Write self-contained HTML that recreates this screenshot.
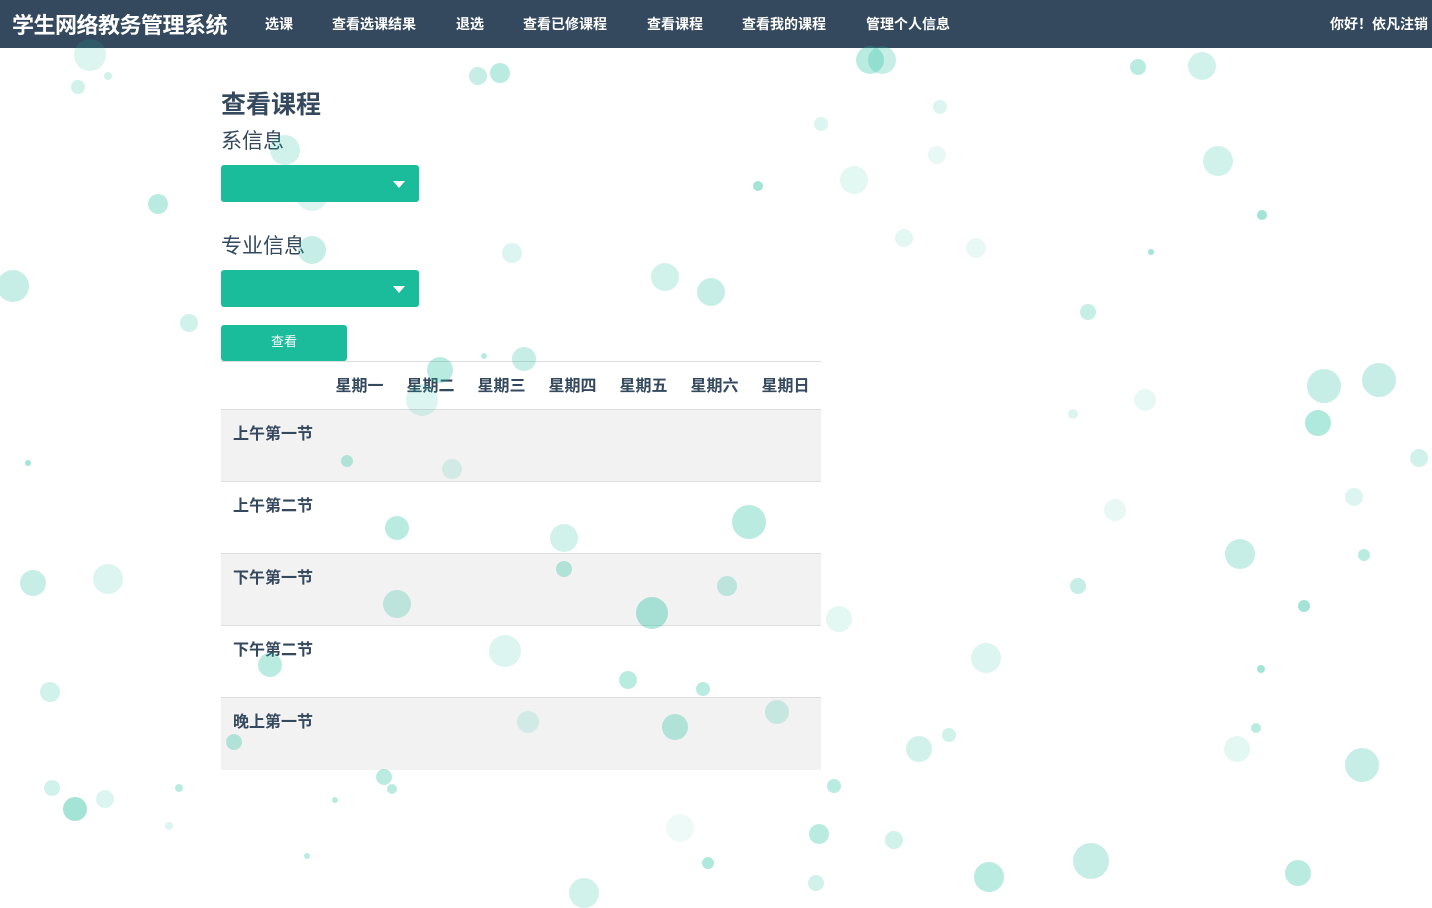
<!DOCTYPE html>
<html><head><meta charset="utf-8"><style>
*{margin:0;padding:0;box-sizing:border-box}
body{width:1432px;height:899px;overflow:hidden;background:#fff;font-family:"Liberation Sans","Noto Sans CJK SC",sans-serif;position:relative;color:#34495e}
.nav{position:absolute;left:0;top:0;width:1432px;height:48px;background:#34495e;color:#fff;z-index:1}
.nav .brand{position:absolute;left:12px;top:8px;font-size:22px;font-weight:bold;letter-spacing:-0.5px;white-space:nowrap}
.nav a{position:absolute;top:14px;font-size:14px;font-weight:bold;color:#fff;text-decoration:none;white-space:nowrap}
.nav .r{position:absolute;right:4px;top:14px;font-size:14px;font-weight:bold;white-space:nowrap}
.b{position:absolute;border-radius:50%;background:#1abc9c}
.c{position:absolute;left:0;top:0;width:1432px;height:899px;z-index:2}
h2{position:absolute;left:221px;top:85px;font-size:25px;font-weight:bold;color:#34495e;white-space:nowrap}
.lbl{position:absolute;left:221px;font-size:21px;color:#34495e;white-space:nowrap}
.sel{position:absolute;left:221px;width:198px;height:37px;background:#1abc9c;border-radius:3px}
.sel:after{content:"";position:absolute;right:14px;top:16px;border-left:6px solid transparent;border-right:6px solid transparent;border-top:7px solid #fff}
.btn{position:absolute;left:221px;top:325px;width:126px;height:36px;background:#1abc9c;border-radius:3px;color:#fff;font-size:13px;text-align:center;line-height:34px}
table{position:absolute;left:221px;top:361px;width:600px;border-collapse:collapse;border-top:1px solid #ddd;font-size:16px;font-weight:bold;color:#34495e}
th{height:48px;width:71px;text-align:center;font-weight:bold;border-bottom:1px solid #ddd;white-space:nowrap;padding-bottom:3px}
th.f{width:103px}
td{height:72px;vertical-align:top;padding:10px 0 0 12px;border-top:1px solid #ddd}
tr.g td{background:rgba(238,238,238,.75)}
</style></head><body>
<div class="nav"><div class="brand">学生网络教务管理系统</div>
<a style="left:265px">选课</a><a style="left:332px">查看选课结果</a><a style="left:456px">退选</a><a style="left:523px">查看已修课程</a><a style="left:647px">查看课程</a><a style="left:742px">查看我的课程</a><a style="left:866px">管理个人信息</a>
<div class="r">你好！依凡注销</div></div>
<div class="c">
<h2>查看课程</h2>
<div class="lbl" style="top:125px">系信息</div>
<div class="sel" style="top:165px"></div>
<div class="lbl" style="top:230px">专业信息</div>
<div class="sel" style="top:270px"></div>
<div class="btn">查看</div>
<table>
<tr><th class="f"></th><th>星期一</th><th>星期二</th><th>星期三</th><th>星期四</th><th>星期五</th><th>星期六</th><th>星期日</th></tr>
<tr class="g"><td colspan="8">上午第一节</td></tr>
<tr><td colspan="8">上午第二节</td></tr>
<tr class="g"><td colspan="8">下午第一节</td></tr>
<tr><td colspan="8">下午第二节</td></tr>
<tr class="g"><td colspan="8">晚上第一节</td></tr>
</table>
</div>
<div id="bb" style="position:absolute;left:0;top:0;z-index:3"></div>
<script>
var d=[[90,55,16,.15],[78,87,7,.2],[108,76,4,.2],[478,76,9,.25],[500,73,10,.3],[870,60,14,.3],[882,60,14,.25],[1138,67,8,.3],[1202,66,14,.2],[940,107,7,.15],[821,124,7,.15],[937,155,9,.1],[854,180,14,.12],[758,186,5,.4],[1218,161,15,.2],[1262,215,5,.4],[285,150,15,.2],[312,195,16,.15],[158,204,10,.3],[13,286,16,.25],[189,323,9,.2],[312,250,14,.25],[512,253,10,.15],[665,277,14,.2],[711,292,14,.25],[904,238,9,.12],[976,248,10,.1],[1151,252,3,.4],[1088,312,8,.25],[1324,386,17,.25],[1379,380,17,.25],[1318,423,13,.35],[1145,400,11,.1],[1073,414,5,.15],[440,370,13,.3],[524,359,12,.25],[422,400,16,.15],[484,356,3,.3],[347,461,6,.3],[452,469,10,.15],[28,463,3,.4],[1419,458,9,.2],[1115,510,11,.1],[1354,497,9,.15],[397,528,12,.3],[564,538,14,.2],[749,522,17,.3],[1240,554,15,.25],[1364,555,6,.3],[564,569,8,.3],[727,586,10,.25],[397,604,14,.25],[652,613,16,.35],[839,619,13,.12],[33,583,13,.25],[108,579,15,.15],[1078,586,8,.25],[1304,606,6,.4],[505,651,16,.15],[270,665,12,.3],[986,658,15,.15],[628,680,9,.3],[703,689,7,.3],[1261,669,4,.4],[50,692,10,.2],[528,722,11,.15],[675,727,13,.3],[777,712,12,.2],[234,742,8,.3],[919,749,13,.2],[949,735,7,.2],[1237,749,13,.12],[1256,728,5,.3],[1362,765,17,.25],[384,777,8,.3],[392,789,5,.3],[52,788,8,.2],[75,809,12,.4],[105,799,9,.15],[179,788,4,.3],[834,786,7,.3],[680,828,14,.08],[819,834,10,.3],[894,840,9,.2],[708,863,6,.35],[816,883,8,.2],[989,877,15,.3],[1091,861,18,.25],[1298,873,13,.3],[584,893,15,.2],[169,826,4,.15],[307,856,3,.3],[335,800,3,.3]];
var h='';d.forEach(function(a){h+='<div class="b" style="left:'+(a[0]-a[2])+'px;top:'+(a[1]-a[2])+'px;width:'+2*a[2]+'px;height:'+2*a[2]+'px;opacity:'+a[3]+'"></div>'});
document.getElementById('bb').innerHTML=h;
</script>
</body></html>
